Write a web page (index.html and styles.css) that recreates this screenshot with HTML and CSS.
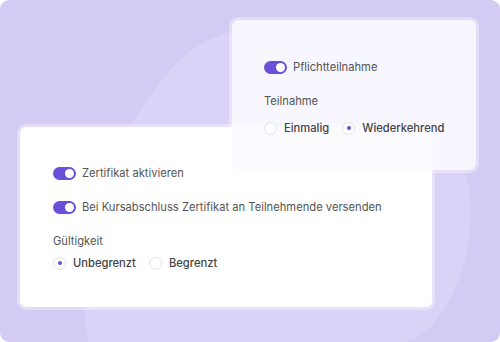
FILE: index.html
```html
<!doctype html>
<html lang="de">
<head>
	<meta charset="UTF-8"/>
	<title>Zertifikat Einstellungen</title>
	<link rel="stylesheet" href="styles.css">
</head>
<body>
	<div class="stage">
		<svg class="blob" width="500" height="342" viewBox="0 0 500 342">
			<path d="M88 342 C 70 250, 110 130, 180 60 C 230 10, 330 20, 400 70 C 470 120, 490 220, 450 300 C 435 325, 420 342, 400 342 Z" fill="#dad2f7"/>
		</svg>

		<div class="card cardBottom">
			<div class="row">
				<span class="toggle"><i></i></span>
				<span class="label">Zertifikat aktivieren</span>
			</div>
			<div class="row">
				<span class="toggle"><i></i></span>
				<span class="label">Bei Kursabschluss Zertifikat an Teilnehmende versenden</span>
			</div>
			<p class="title">Gültigkeit</p>
			<div class="radios">
				<span class="radio on"></span><span class="rlabel">Unbegrenzt</span>
				<span class="radio"></span><span class="rlabel">Begrenzt</span>
			</div>
		</div>

		<div class="card cardTop">
			<div class="row">
				<span class="toggle"><i></i></span>
				<span class="label">Pflichtteilnahme</span>
			</div>
			<p class="title">Teilnahme</p>
			<div class="radios">
				<span class="radio"></span><span class="rlabel">Einmalig</span>
				<span class="radio on"></span><span class="rlabel">Wiederkehrend</span>
			</div>
		</div>
	</div>
</body>
</html>
```

FILE: styles.css
```css
*				{ padding:0; margin:0; box-sizing:border-box; }
body			{ background:#fff; font-family:Inter, "Noto Sans", sans-serif; color:#555; }
.stage			{ width:500px; height:342px; background:#d4cbf4; border-radius:9px; display:grid; overflow:hidden; position:relative; }
.blob			{ position:absolute; top:0; left:0; }
.card			{ grid-area:1 / 1; position:relative; border-radius:6px; box-shadow:0 0 0 3px rgba(255,255,255,0.35); }
.cardTop		{ margin:20px 0 0 232px; width:244px; height:150px; background:rgba(252,251,255,0.88); padding:40px 0 0 32px; }
.cardBottom		{ margin:127px 0 0 20px; width:412px; height:180px; background:#fff; padding:39px 0 0 33px; }
.row			{ display:flex; align-items:center; gap:6px; height:14px; margin-bottom:20px; }
.toggle			{ width:23px; height:13px; border-radius:7px; background:#6a50d8; display:flex; align-items:center; justify-content:flex-end; padding-right:2px; flex:none; }
.toggle i		{ width:9px; height:9px; border-radius:50%; background:#fff; }
.label			{ font-size:11.2px; color:#555; }
.title			{ font-size:11.2px; color:#555; line-height:14px; margin-bottom:8px; }
.cardTop .title	{ margin-top:6px; margin-bottom:13px; }
.radios			{ display:flex; align-items:center; height:14px; }
.radio			{ width:13px; height:13px; border-radius:50%; border:1px solid #e2e0e8; background:#fff; display:flex; align-items:center; justify-content:center; flex:none; margin-right:7px; }
.radio.on::after	{ content:""; width:4px; height:4px; border-radius:50%; background:#6a50d8; }
.rlabel			{ font-size:11.2px; font-weight:450; color:#444; margin-right:13px; }
```
